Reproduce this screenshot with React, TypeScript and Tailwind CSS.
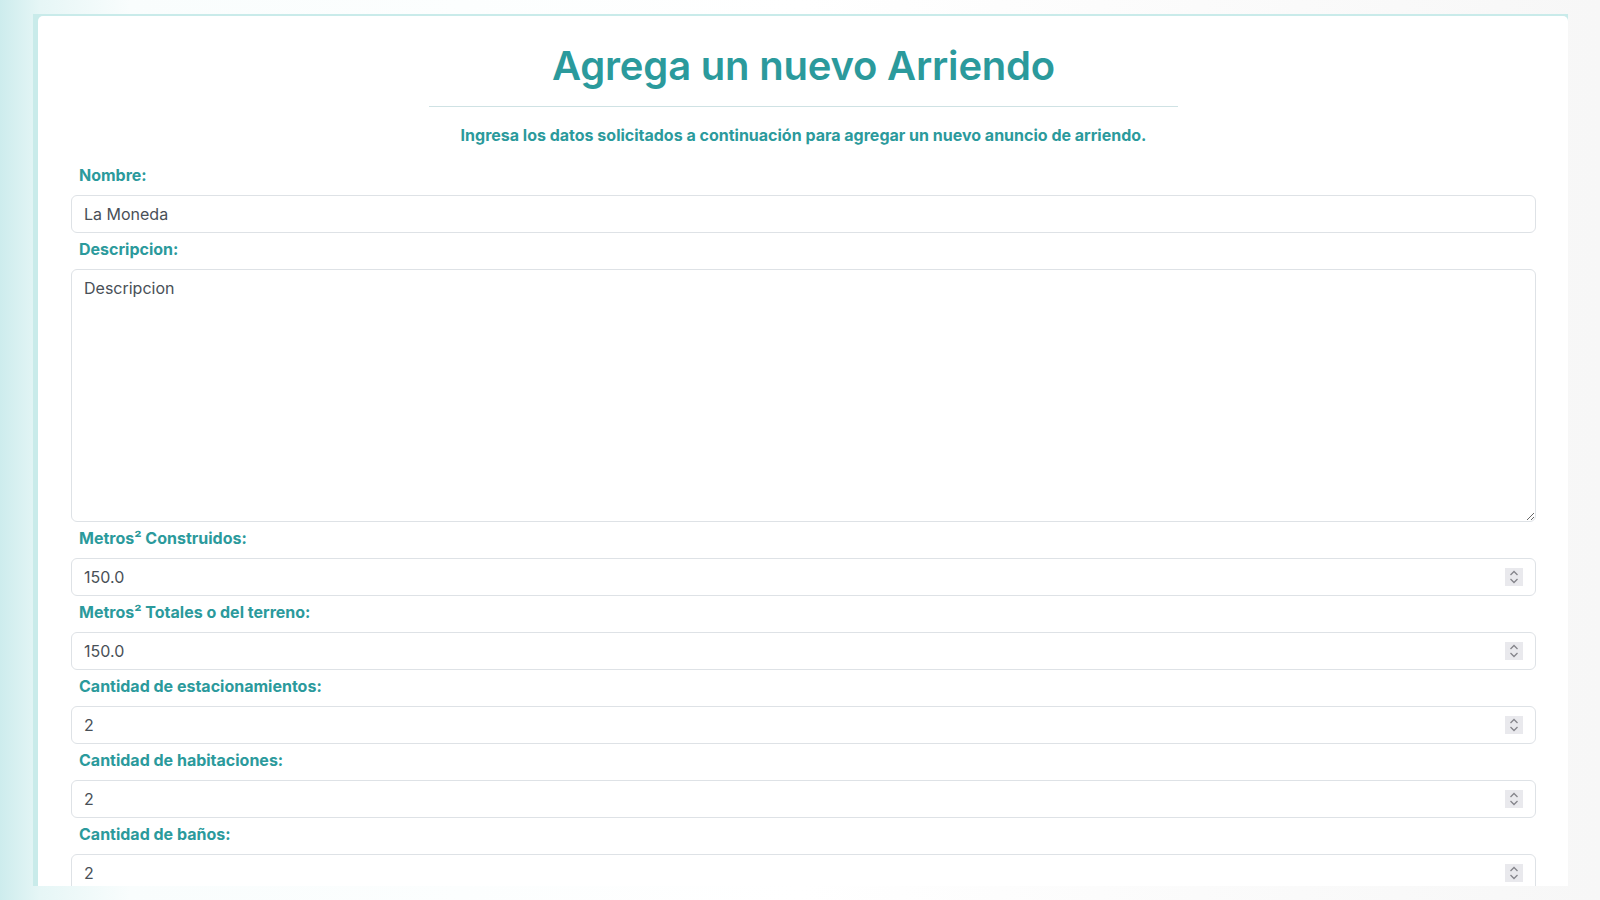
import React from "react";

const fields = [
  { label: "Metros² Construidos:", value: "150.0" },
  { label: "Metros² Totales o del terreno:", value: "150.0" },
  { label: "Cantidad de estacionamientos:", value: "2" },
  { label: "Cantidad de habitaciones:", value: "2" },
  { label: "Cantidad de baños:", value: "2" },
];

function Spinner() {
  return (
    <div className="absolute right-[13px] top-1/2 -translate-y-1/2 w-[18px] h-[18px] bg-[#e9e9ed] flex flex-col items-center justify-center gap-[2px]">
      <svg width="10" height="6" viewBox="0 0 10 6" fill="none">
        <path d="M1.5 5L5 1.5L8.5 5" stroke="#85858b" strokeWidth="1.3" />
      </svg>
      <svg width="10" height="6" viewBox="0 0 10 6" fill="none">
        <path d="M1.5 1L5 4.5L8.5 1" stroke="#85858b" strokeWidth="1.3" />
      </svg>
    </div>
  );
}

function Label({ children }: { children: React.ReactNode }) {
  return (
    <label className="block px-2 mt-[4px] mb-2 text-[16px] leading-6 font-bold text-[#2b9a9c]">
      {children}
    </label>
  );
}

export default function App() {
  return (
    <div
      className="h-screen w-full overflow-hidden pt-[14px] pl-[33px] pr-[32px] bg-[linear-gradient(to_right,#cdeced_0px,#e6f6f6_40px,#f9fdfd_130px,#ffffff_50%,#f7f7f7_100%)]"
      style={{ fontFamily: "Inter, 'Noto Sans', sans-serif" }}
    >
      <div className="h-[872px] overflow-hidden bg-[#c9ebea] pl-[5px] pt-[2px]">
        <div className="h-full bg-white rounded-t-[5px] pl-[33px] pr-[32px] pt-[26px]">
          <h1 className="text-center text-[40px] leading-[48px] font-semibold text-[#2b9a9c] tracking-[-0.2px]">
            Agrega un nuevo Arriendo
          </h1>
          <div className="mx-auto mt-4 w-[749px] h-px bg-[#cfe2e4]" />
          <p className="mt-4 mb-[16px] text-center text-[16px] leading-6 font-bold text-[#2b9a9c]">
            Ingresa los datos solicitados a continuación para agregar un nuevo anuncio de arriendo.
          </p>

          <Label>Nombre:</Label>
          <input
            type="text"
            defaultValue="La Moneda"
            className="block w-full h-[38px] px-3 rounded-[6px] border border-[#dee2e6] text-[16px] text-[#495057] outline-none"
          />

          <Label>Descripcion:</Label>
          <textarea
            defaultValue="Descripcion"
            className="block w-full h-[253px] px-3 py-1.5 leading-6 rounded-[6px] border border-[#dee2e6] text-[16px] text-[#495057] outline-none"
          />

          {fields.map((f) => (
            <div key={f.label}>
              <Label>{f.label}</Label>
              <div className="relative">
                <input
                  type="text"
                  defaultValue={f.value}
                  className="block w-full h-[38px] px-3 rounded-[6px] border border-[#dee2e6] text-[16px] text-[#495057] outline-none"
                />
                <Spinner />
              </div>
            </div>
          ))}
        </div>
      </div>
    </div>
  );
}
